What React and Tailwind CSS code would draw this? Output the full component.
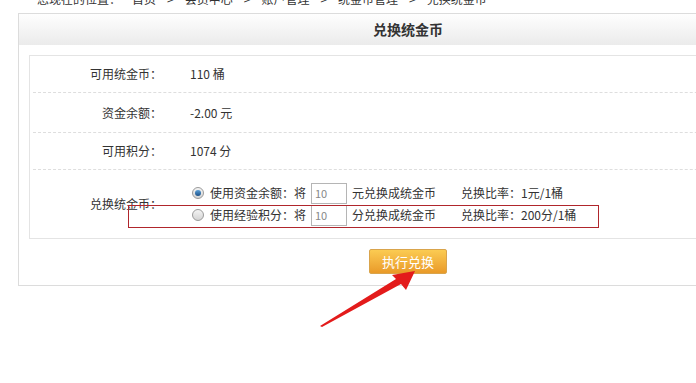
import React from "react";

const crumbs = ["您现在的位置：", "首页", "会员中心", "账户管理", "统金币管理", "兑换统金币"];

const rows = [
  { label: "可用统金币：", value: "110 桶" },
  { label: "资金余额：", value: "-2.00 元" },
  { label: "可用积分：", value: "1074 分" },
];

const options = [
  { checked: true, text: "使用资金余额：将", unit: "元兑换成统金币", rate: "兑换比率：1元/1桶" },
  { checked: false, text: "使用经验积分：将", unit: "分兑换成统金币", rate: "兑换比率：200分/1桶" },
];

const Radio = ({ checked }) => (
  <span className="flex h-[12px] w-[12px] items-center justify-center rounded-full border border-[#9a9a9a] bg-gradient-to-b from-[#f4f4f4] to-[#d4d4d4]">
    {checked && (
      <span className="h-[6px] w-[6px] rounded-full bg-gradient-to-b from-[#5aa0d8] to-[#1b4f86]" />
    )}
  </span>
);

const App = () => {
  return (
    <div
      className="relative h-[383px] w-[696px] overflow-hidden bg-white text-[12px] text-[#333]"
      style={{ fontFamily: '"Noto Sans CJK SC", "Noto Sans", sans-serif' }}
    >
      {/* breadcrumb, mostly scrolled off */}
      <div className="h-[13px] overflow-hidden">
        <div className="-mt-[10px] ml-[37px] flex gap-[11px] whitespace-nowrap text-[12px] leading-[17px] text-[#333]">
          {crumbs.map((c, i) => (
            <React.Fragment key={c}>
              {i > 1 && <span>&gt;</span>}
              <span>{c}</span>
            </React.Fragment>
          ))}
        </div>
      </div>

      <div className="ml-[18px] w-[780px] border border-[#dcdcdc]">
        <div className="flex h-[31px] items-center justify-center bg-gradient-to-b from-[#fefefe] to-[#ebebeb] text-[14px] font-bold text-[#333]">
          兑换统金币
        </div>

        <div className="px-[10px] pt-[10px]">
          <div className="border border-[#e4e4e4]">
            {rows.map((r, i) => (
              <div
                key={r.label}
                className={`mx-[3px] flex items-center border-b border-dashed border-[#dedede] ${
                  i === 1 ? "h-[40px]" : "h-[37px]"
                }`}
              >
                <div className="w-[129px] text-right">{r.label}</div>
                <div className="pl-[28px]">{r.value}</div>
              </div>
            ))}
            <div className="mx-[3px] flex h-[68px] items-center">
              <div className="w-[129px] text-right">兑换统金币：</div>
              <div className="flex flex-col pl-[30px]">
                {options.map((o) => (
                  <div key={o.text} className="flex h-[22px] items-center">
                    <Radio checked={o.checked} />
                    <span className="ml-[6px] whitespace-nowrap">{o.text}</span>
                    <span className="ml-[5px] flex h-[21px] w-[36px] items-center border border-[#b5b5b5] pl-[3px] text-[11px] text-[#888]">
                      10
                    </span>
                    <span className="ml-[5px] w-[109px] whitespace-nowrap">{o.unit}</span>
                    <span className="whitespace-nowrap">{o.rate}</span>
                  </div>
                ))}
              </div>
            </div>
          </div>
        </div>

        <div className="flex justify-center pb-[11px] pt-[10px]">
          <button className="flex h-[25px] w-[78px] items-center justify-center rounded-[2px] border border-[#d9a44c] bg-gradient-to-b from-[#fbcb52] to-[#e99a28] text-[13px] text-white">
            执行兑换
          </button>
        </div>
      </div>

      {/* annotation: red box */}
      <div className="absolute left-[128px] top-[205px] h-[23px] w-[471px] border-[1.5px] border-[#b0262c]" />

      {/* annotation: red arrow */}
      <svg className="absolute left-0 top-0" width="696" height="383" viewBox="0 0 696 383">
        <polygon
          points="320,326 396,279 392,275 415,271 406,290 401,284 322,327"
          fill="#e31b1b"
        />
      </svg>
    </div>
  );
};

export default App;
